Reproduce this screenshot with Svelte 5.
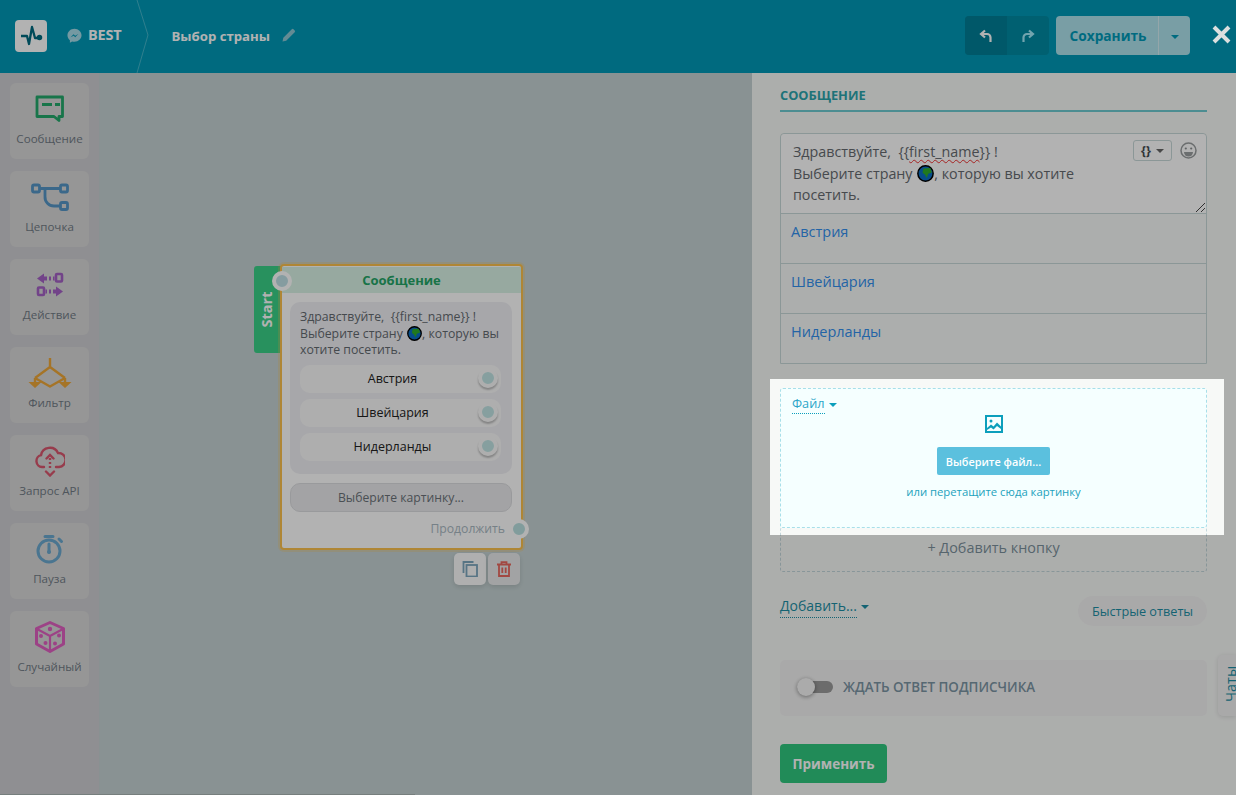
<script>
  const tools = [
    { label: 'Сообщение', id: 'msg' },
    { label: 'Цепочка', id: 'chain' },
    { label: 'Действие', id: 'action' },
    { label: 'Фильтр', id: 'filter' },
    { label: 'Запрос API', id: 'api' },
    { label: 'Пауза', id: 'pause' },
    { label: 'Случайный', id: 'dice' }
  ];
  const countries = ['Австрия', 'Швейцария', 'Нидерланды'];
</script>

{#snippet globe(size)}
  <svg class="globe" width={size} height={size} viewBox="0 0 16 16">
    <circle cx="8" cy="8" r="7.2" fill="#0b6fc4" stroke="#000" stroke-width="1.4"/>
    <path d="M6 3.2 L12.5 2.8 L14 7 L10.5 8.2 L9.2 12.2 L7.6 9.2 L5.2 7.2 Z" fill="#2fae2c"/>
  </svg>
{/snippet}

<div class="root">
  <header class="header">
    <div class="logo">
      <svg width="24" height="24" viewBox="0 0 24 24" fill="none" stroke="#006b80" stroke-width="2.300" stroke-linejoin="round">
        <path d="M2 12h6l2 8 3-17 3 11h5"/><circle cx="20.500" cy="13.500" r="1.600" fill="#006b80"/>
      </svg>
    </div>
    <svg class="messenger" width="15" height="15" viewBox="0 0 16 16">
      <path d="M8 .8C3.8.8.5 3.9.5 7.8c0 2.1 1 4 2.6 5.2v2.6l2.4-1.3c.8.2 1.6.3 2.5.3 4.2 0 7.5-3 7.5-6.8S12.200.8 8 .8z" fill="#a6dbe8"/>
      <path d="M3.800 9.900 7 6.600l1.700 1.700 3.300-1.800-3.200 3.400L7.100 8.200z" fill="#0099b7"/>
    </svg>
    <span class="best">BEST</span>
    <svg class="chev" width="14" height="73" viewBox="0 0 14 73" fill="none" stroke="#45b6cb" stroke-width="1"><path d="M1 0 12 35 1 73"/></svg>
    <span class="flow-name">Выбор страны</span>
    <svg class="pencil" width="14" height="14" viewBox="0 0 14 14"><path d="M0.500 13.500 1.300 9.800 9.800 1.300a1.200 1.200 0 0 1 1.700 0l1.200 1.200a1.200 1.200 0 0 1 0 1.700L4.200 12.700z" fill="#8fc8d4"/></svg>
    <div class="spacer"></div>
    <div class="history">
      <button class="hist dark" aria-label="undo">
        <svg width="14" height="14" viewBox="0 0 14 14" fill="none" stroke="#fff" stroke-width="2.200"><path d="M6 1.500 2 5l4 3.500M2.500 5H8a3.500 3.500 0 0 1 3.500 3.500V13"/></svg>
      </button>
      <button class="hist" aria-label="redo">
        <svg width="14" height="14" viewBox="0 0 14 14" fill="none" stroke="#a4ebfa" stroke-width="2.200"><path d="M8 1.500 12 5 8 8.500M11.500 5H6a3.500 3.500 0 0 0-3.500 3.500V13"/></svg>
      </button>
    </div>
    <div class="save">
      <span class="save-label">Сохранить</span>
      <span class="save-caret"><i class="caret dark-caret"></i></span>
    </div>
    <svg class="close" width="19" height="19" viewBox="0 0 19 19" stroke="#dcdfdf" stroke-width="4"><path d="M2 2 17 17M17 2 2 17"/></svg>
  </header>

  <div class="body">
    <aside class="sidebar">
      {#each tools as t}
        <div class="tool">
          <div class="tool-icon">
            {#if t.id === 'msg'}
              <svg width="30" height="28" viewBox="0 0 30 28" fill="none" stroke="#23a86a" stroke-width="2.800"><path d="M2 2h25.500v19.500H24v4l-5-4H2z" stroke-linejoin="round"/><path d="M7 9.500h10M20 9.500h5"/></svg>
            {:else if t.id === 'chain'}
              <svg width="38" height="28" viewBox="0 0 38 28" fill="none" stroke="#5596c6" stroke-width="2.800"><rect x="1.500" y="2" width="7" height="7" rx="1.500"/><rect x="29.500" y="2" width="7" height="7" rx="1.500"/><rect x="29.500" y="19.500" width="7" height="7" rx="1.500"/><path d="M8.500 5.500h21M14 5.500v8a9 9 0 0 0 9 9.500h6.500"/></svg>
            {:else if t.id === 'action'}
              <svg width="28" height="26" viewBox="0 0 28 26"><g fill="#a460c4"><path d="M1 6.500 8 1.500v3h3v4H8v3zM13 4.500h2v4h-2zM17 4.500h1.500v4H17z"/><path d="M27 19.500 20 14.500v3h-3v4h3v3zM15 17.500h-2v4h2zM11 17.500H9.500v4H11z"/></g><g fill="none" stroke="#a460c4" stroke-width="2.600"><rect x="20" y="2" width="6" height="7.500" rx="1"/><rect x="2" y="15.500" width="6" height="7.500" rx="1"/></g></svg>
            {:else if t.id === 'filter'}
              <svg width="44" height="30" viewBox="0 0 44 30" fill="none" stroke="#eda638" stroke-width="2.400"><path d="M22 0v9M22 9 7 20M22 9l15 11M7 20l15 8.500L37 20" stroke-linejoin="round"/><path d="M0.500 24h13L7 30zM30.500 24h13L37 30z" fill="#eda638" stroke="none"/><path d="M7 20V25M37 20V25"/></svg>
            {:else if t.id === 'api'}
              <svg width="30" height="32" viewBox="0 0 30 32" fill="none" stroke="#d8566e" stroke-width="2.400" stroke-linecap="round"><path d="M9 22H7a6 6 0 0 1-1-11.800A9 9 0 0 1 23 8a6.800 6.800 0 0 1 1 14h-3"/><path d="M15 13v12" stroke-dasharray="2 2" stroke-linecap="butt"/><path d="M11.500 13.500 15 10l3.500 3.500M11 26.500l4 4 4-4"/></svg>
            {:else if t.id === 'pause'}
              <svg width="28" height="30" viewBox="0 0 28 30" fill="none" stroke="#6aa8ce" stroke-width="3"><circle cx="13" cy="17" r="11"/><path d="M9 2.500h8M23 5l2.500 2.500" stroke-linecap="round"/><path d="M13 10v8" stroke-linecap="round"/><circle cx="13" cy="18" r="2" fill="#6aa8ce" stroke="none"/></svg>
            {:else}
              <svg width="32" height="32" viewBox="0 0 32 32"><path d="M16 1.500 29.500 7.500V23L16 30.500 2.500 23V7.500z" fill="none" stroke="#e05fc0" stroke-width="3" stroke-linejoin="round"/><path d="M3 8l13 7 13-7M16 15v15" fill="none" stroke="#e05fc0" stroke-width="2.200"/><g fill="#e05fc0"><circle cx="16" cy="8" r="2.200"/><circle cx="7" cy="15" r="2"/><circle cx="11.500" cy="22" r="2"/><circle cx="21" cy="22.500" r="2"/><circle cx="25" cy="14.500" r="2"/></g></svg>
            {/if}
          </div>
          <span class="tool-label">{t.label}</span>
        </div>
      {/each}
    </aside>

    <main class="canvas">
      <div class="start"><span>Start</span></div>
      <div class="node">
        <div class="node-title">Сообщение</div>
        <div class="node-inner">
          <div class="bubble">
            <p class="bubble-text">Здравствуйте, &nbsp;&#123;&#123;first_name&#125;&#125; !<br>Выберите страну {@render globe(15)}, которую вы хотите посетить.</p>
            <div class="node-btns">
              {#each countries as c}
                <div class="node-btn"><span>{c}</span><i class="port btn-port"></i></div>
              {/each}
            </div>
          </div>
          <div class="pick">Выберите картинку...</div>
          <div class="cont">Продолжить</div>
        </div>
        <i class="port cont-port"></i>
      </div>
      <i class="port start-port"></i>
      <div class="node-tools">
        <span class="nt" aria-label="copy">
          <svg width="16" height="16" viewBox="0 0 16 16" fill="none" stroke="#7da6bd" stroke-width="1.800"><path d="M11.500 1H1.500v11"/><rect x="4.500" y="4" width="10.500" height="11.500"/></svg>
        </span>
        <span class="nt" aria-label="delete">
          <svg width="16" height="16" viewBox="0 0 16 16" fill="none" stroke="#e9685f" stroke-width="1.800"><path d="M1 3.500h14M5.500 3.500V1.200h5v2.300M3 3.500v11.500h10V3.500M6.300 6.500V12M9.700 6.500V12"/></svg>
        </span>
      </div>
      <div class="hscroll"></div>
    </main>

    <section class="panel">
      <h2 class="panel-title">СООБЩЕНИЕ</h2>
      <div class="msg-group">
        <div class="textarea">
          <div class="ta-text">Здравствуйте, &nbsp;&#123;&#123;<u class="spell">first_name</u>&#125;&#125; !<br>Выберите страну {@render globe(17)}, которую вы хотите посетить.</div>
          <div class="ta-tools">
            <span class="vars"><b>&#123;&#125;</b><i class="caret grey-caret"></i></span>
            <svg width="17" height="17" viewBox="0 0 17 17" fill="none" stroke="#9a9e9f" stroke-width="1.500"><circle cx="8.500" cy="8.500" r="7.500"/><circle cx="5.800" cy="6.500" r="1.100" fill="#8a8e90" stroke="none"/><circle cx="11.200" cy="6.500" r="1.100" fill="#8a8e90" stroke="none"/><path d="M4 10h9a4.500 4.500 0 0 1-9 0z" fill="#9a9e9f" stroke="none"/></svg>
          </div>
          <svg class="resize" width="9" height="9" viewBox="0 0 9 9" stroke="#444" stroke-width="1"><path d="M0 9 9 0M5 9l4-4"/></svg>
        </div>
        {#each countries as c}
          <div class="row-btn">{c}</div>
        {/each}
      </div>

      <div class="file">
        <div class="file-type"><span>Файл</span><i class="caret file-caret"></i></div>
        <svg class="file-icon" width="18" height="18" viewBox="0 0 18 18"><rect x="1" y="1" width="16" height="16" fill="none" stroke="#0c9fbc" stroke-width="2"/><circle cx="6" cy="6" r="1.500" fill="#0c9fbc"/><path d="M2 13l4-3.500 2.500 2 3.500-4 4 4v2.500l-4-3-3.500 3.500-2.500-2L2 15z" fill="#0c9fbc"/></svg>
        <div class="file-btn">Выберите файл...</div>
        <div class="file-hint">или перетащите сюда картинку</div>
      </div>
      <div class="add-btn">+ Добавить кнопку</div>

      <div class="actions">
        <div class="add-more"><span>Добавить...</span><i class="caret teal-caret"></i></div>
        <div class="quick">Быстрые ответы</div>
      </div>

      <div class="wait">
        <span class="toggle"><i></i></span>
        <span class="wait-label">ЖДАТЬ ОТВЕТ ПОДПИСЧИКА</span>
      </div>

      <button class="apply">Применить</button>
      <div class="chats"><span>Чаты</span></div>
    </section>
  </div>

  <div class="spotlight"></div>
</div>

<style>
  :global(body) { margin: 0; }
  .root {
    position: relative;
    width: 1236px;
    height: 795px;
    overflow: hidden;
    font-family: "Open Sans", "Noto Sans", sans-serif;
    color: #5c6f7a;
    background: #f7f9f7;
  }
  .spotlight {
    position: absolute;
    left: 770px;
    top: 379px;
    width: 454px;
    height: 156px;
    box-shadow: 0 0 0 1400px rgba(0, 0, 0, 0.3);
    pointer-events: none;
    z-index: 5;
  }
  .header {
    height: 73px;
    background: #0099b7;
    display: flex;
    align-items: center;
    padding: 0 5px 2px 15px;
    box-sizing: border-box;
    color: #fff;
  }
  .logo {
    width: 32px;
    height: 32px;
    border-radius: 4px;
    background: #fff;
    display: flex;
    align-items: center;
    justify-content: center;
    margin-top: 1px;
  }
  .messenger { margin-left: 20px; margin-top: -1px; }
  .best { margin-left: 6px; font-size: 14.500px; font-weight: 700; margin-top: -3px; color: #fff; letter-spacing: -0.2px; }
  .chev { margin-left: 15px; flex: none; margin-top: 2px; }
  .flow-name { margin-left: 21px; font-size: 13.200px; font-weight: 700; color: #fff; white-space: nowrap; }
  .pencil { margin-left: 12px; margin-top: -1px; }
  .spacer { flex: 1; }
  .history { display: flex; height: 39px; border-radius: 4px; overflow: hidden; background: #008aa3; }
  .hist { width: 42px; border: 0; padding: 0; background: transparent; display: flex; align-items: center; justify-content: center; }
  .hist.dark { background: #007f97; }
  .save {
    margin-left: 7px;
    width: 134px;
    height: 39px;
    display: flex;
    border-radius: 4px;
    overflow: hidden;
    background: #aee2ed;
    color: #009ab8;
    font-weight: 700;
    font-size: 13.700px;
  }
  .save-label { width: 102px; display: flex; align-items: center; justify-content: center; white-space: nowrap; padding-left: 2px; box-sizing: border-box; }
  .save-caret { flex: 1; border-left: 1px solid #d5eef4; display: flex; align-items: center; justify-content: center; padding-top: 2px; }
  .caret { display: inline-block; width: 0; height: 0; border-left: 4px solid transparent; border-right: 4px solid transparent; border-top: 4px solid currentColor; }
  .dark-caret { color: #009ab8; }
  .close { margin-left: 22px; position: relative; z-index: 6; margin-top: -2px; }

  .body { display: flex; height: 722px; }
  .sidebar {
    width: 100px;
    flex: none;
    box-sizing: border-box;
    padding: 10px;
    display: flex;
    flex-direction: column;
    gap: 12px;
    background: #cdcdd1;
    border-right: 1px solid #c4d0d2;
  }
  .tool {
    height: 76px;
    flex: none;
    border-radius: 6px;
    background: #d7d7d7;
    display: flex;
    flex-direction: column;
    align-items: center;
    box-sizing: border-box;
    padding-top: 9px;
  }
  .tool-icon { height: 34px; display: flex; align-items: center; justify-content: center; }
  .tool-label { margin-top: 5px; font-size: 11.600px; line-height: 16px; color: #717b85; white-space: nowrap; }

  .canvas { position: relative; flex: 1; background: #c5d2d3; }
  .hscroll { position: absolute; left: -100px; width: 415px; bottom: 0; height: 1px; background: #aab5b3; }
  .start {
    position: absolute;
    left: 154px;
    top: 193px;
    width: 28px;
    height: 87px;
    border-radius: 3px 0 0 3px;
    background: #3ad087;
    color: #fff;
    font-weight: 700;
    font-size: 14.500px;
    display: flex;
    align-items: center;
    justify-content: center;
    padding-right: 2px;
    box-sizing: border-box;
  }
  .start span { transform: rotate(-90deg); }
  .port {
    display: block;
    box-sizing: border-box;
    width: 20px;
    height: 20px;
    border-radius: 50%;
    background: #a4d2d2;
    border: 4px solid #fff;
    position: absolute;
  }
  .start-port { left: 172px; top: 198px; width: 20px; height: 20px; border-color: #fff; background: #bfe0e6; }
  .node {
    position: absolute;
    left: 180px;
    top: 191px;
    width: 243px;
    height: 286px;
    box-sizing: border-box;
    border: 2px solid #fbc04c;
    box-shadow: 0 0 0 2px rgba(251, 192, 76, 0.25);
    border-radius: 4px;
    background: #fff;
  }
  .node-title {
    height: 26px;
    margin-top: 1px;
    background: #d9f3e6;
    color: #23a566;
    font-size: 13px;
    font-weight: 700;
    display: flex;
    align-items: center;
    justify-content: center;
  }
  .node-inner { padding: 9px 9px 0 8px; }
  .bubble { background: #f0f0f4; border-radius: 10px; padding: 7px 11px 12px 10px; height: 172px; box-sizing: border-box; }
  .bubble-text { margin: 0; font-size: 12.300px; line-height: 16.500px; color: #646a70; }
  .globe { vertical-align: -3px; margin-left: 1px; }
  .node-btns { display: flex; flex-direction: column; gap: 6px; margin-top: 6px; }
  .node-btn {
    position: relative;
    height: 28px;
    border-radius: 10px;
    background: #fafafa;
    color: #222;
    font-size: 12.500px;
    display: flex;
    align-items: center;
    justify-content: center;
    padding-right: 16px;
  }
  .btn-port {
    right: 3px;
    top: 3px;
    width: 20px;
    height: 20px;
    box-shadow: 0 2px 2px rgba(0, 0, 0, 0.25);
    border-color: #fafafa;
    background: #c0e4e4;
    border-radius: 50%;
  }
  .pick {
    margin-top: 9px;
    height: 29px;
    box-sizing: border-box;
    border: 1px solid #dcdde0;
    border-radius: 10px;
    background: #eaeaec;
    color: #6b7279;
    font-size: 12.200px;
    display: flex;
    align-items: center;
    justify-content: center;
  }
  .cont { margin-top: 8px; text-align: right; padding-right: 7px; font-size: 12.200px; line-height: 17px; color: #a9b8c2; }
  .cont-port { right: -8px; bottom: 9px; background: #b9e0e0; }
  .node-tools { position: absolute; left: 354px; top: 480px; display: flex; gap: 2px; }
  .nt {
    width: 32px;
    height: 32px;
    border-radius: 5px;
    background: #e8eaeb;
    display: flex;
    align-items: center;
    justify-content: center;
    box-shadow: 0 2px 5px rgba(0, 0, 0, 0.12);
  }
  .nt:first-child { background: #fbfbfb; }

  .panel { position: relative; width: 484px; flex: none; box-sizing: border-box; padding: 13px 29px 0 28px; background: #f7f9f7; }
  .panel-title { margin: 0; height: 26px; box-sizing: border-box; border-bottom: 2px solid #6ecbd0; font-size: 12.800px; font-weight: 700; color: #2ca5ad; line-height: 19px; }
  .msg-group { margin-top: 21px; border: 1px solid #c8d8d8; border-radius: 4px 4px 0 0; background: #f7faf8; }
  .textarea { position: relative; height: 80px; box-sizing: border-box; padding: 7px 12px; background: #fff; border-radius: 4px 4px 0 0; border-bottom: 1px solid #c8d8d8; }
  .ta-text { width: 300px; font-size: 14.300px; line-height: 21.500px; color: #666b70; }
  .spell { text-decoration: underline wavy #e33 1px; text-underline-offset: 2px; }
  .ta-tools { position: absolute; right: 9px; top: 6px; display: flex; align-items: center; gap: 8px; }
  .vars { width: 39px; height: 21px; box-sizing: border-box; border: 1px solid #c8d8d8; border-radius: 3px; display: flex; align-items: center; justify-content: center; gap: 5px; font-size: 12.500px; color: #444b50; }
  .grey-caret { color: #666; }
  .resize { position: absolute; right: 1px; bottom: 1px; }
  .row-btn { height: 50px; box-sizing: border-box; padding: 7px 10px; border-bottom: 1px solid #c8d8d8; font-size: 14.500px; line-height: 22px; color: #3390ee; }
  .row-btn:last-child { border-bottom: 0; height: 49px; }
  .file {
    position: relative;
    margin-top: 24px;
    height: 140px;
    box-sizing: border-box;
    border: 1px dashed #a8dfe9;
    border-radius: 3px;
    background: #f5ffff;
    display: flex;
    flex-direction: column;
    align-items: center;
    padding-top: 26px;
  }
  .file-type { position: absolute; left: 11px; top: 6px; display: flex; align-items: center; gap: 4px; font-size: 12.700px; line-height: 16px; color: #2ca6c9; }
  .file-type span { border-bottom: 1px dotted #0c9fbc; padding-bottom: 2px; }
  .file-caret { color: #0c9fbc; margin-top: 1px; }
  .file-btn {
    margin-top: 14px;
    width: 113px;
    height: 28px;
    border-radius: 2px;
    background: #5bc0de;
    color: #fff;
    font-size: 10.900px;
    font-weight: 600;
    display: flex;
    align-items: center;
    justify-content: center;
    white-space: nowrap;
  }
  .file-hint { margin-top: 9px; font-size: 11.300px; line-height: 16px; color: #23a2bd; }
  .add-btn {
    margin-top: -1px;
    height: 45px;
    box-sizing: border-box;
    border: 1px dashed #c3d7dc;
    border-radius: 3px;
    display: flex;
    align-items: center;
    justify-content: center;
    font-size: 14.400px;
    color: #7c919c;
    padding-bottom: 4px;
  }
  .actions { margin-top: 24px; height: 30px; display: flex; align-items: center; justify-content: space-between; }
  .add-more { display: flex; align-items: center; gap: 4px; font-size: 14px; color: #1d8fa5; margin-top: -9px; }
  .add-more span { border-bottom: 1px dotted #1d8fa5; line-height: 22px; }
  .teal-caret { color: #1d8fa5; }
  .quick { width: 129px; height: 30px; border-radius: 15px; background: #f3f3f3; color: #1d8fa5; font-size: 12.700px; display: flex; align-items: center; justify-content: center; white-space: nowrap; }
  .wait { margin-top: 34px; height: 56px; border-radius: 5px; background: #f3f3f3; display: flex; align-items: center; padding: 0 0 2px 17px; box-sizing: border-box; }
  .toggle { position: relative; width: 36px; height: 12px; border-radius: 6px; background: #9b9b9b; display: block; }
  .toggle i { position: absolute; left: 0; top: -3px; width: 18px; height: 18px; border-radius: 50%; background: #f5f5f5; box-shadow: 0 1px 4px rgba(0, 0, 0, 0.4); }
  .wait-label { margin-left: 10px; font-size: 13.400px; font-weight: 600; color: #7c95a4; white-space: nowrap; }
  .apply {
    display: block;
    margin-top: 28px;
    width: 107px;
    height: 39px;
    border: 0;
    border-radius: 4px;
    background: #30c77f;
    color: #fff;
    font-family: inherit;
    font-size: 13.500px;
    font-weight: 700;
  }
  .chats {
    position: absolute;
    right: 0;
    top: 582px;
    width: 18px;
    height: 61px;
    border-radius: 5px 0 0 5px;
    background: #f3f3f3;
    box-shadow: 0 1px 5px rgba(0, 0, 0, 0.12);
    overflow: hidden;
    color: #1d8fa5;
    font-size: 14.500px;
  }
  .chats span { position: absolute; left: 4px; top: 47px; transform: rotate(-90deg); transform-origin: 0 0; display: block; line-height: 18px; white-space: nowrap; }
</style>
